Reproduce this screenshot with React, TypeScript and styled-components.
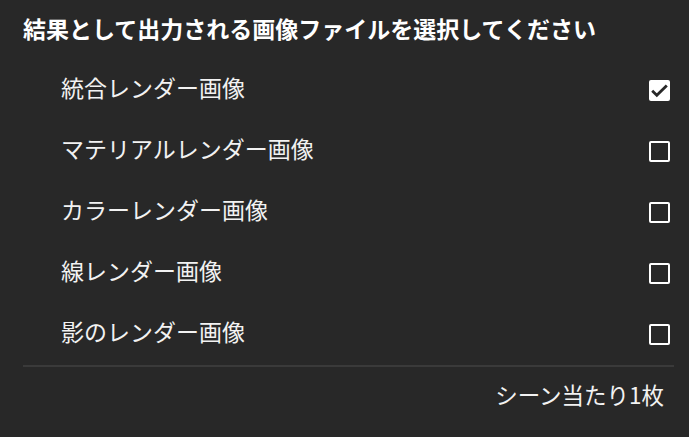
import React, { useState } from "react";
import styled, { createGlobalStyle } from "styled-components";

const GlobalStyle = createGlobalStyle`
  html, body {
    margin: 0;
    padding: 0;
    background: #282828;
  }
  body {
    font-family: "Noto Sans CJK JP", "Noto Sans", sans-serif;
  }
`;

const Panel = styled.div`
  width: 689px;
  height: 437px;
  box-sizing: border-box;
  padding: 0 15px 0 23px;
  background: #282828;
  color: #f2f2f2;
  display: flex;
  flex-direction: column;
`;

const Title = styled.h1`
  margin: 0;
  height: 60px;
  box-sizing: border-box;
  padding-bottom: 4px;
  display: flex;
  align-items: center;
  font-size: 23px;
  line-height: 1;
  font-weight: 700;
  color: #ffffff;
`;

const OptionList = styled.div`
  display: flex;
  flex-direction: column;
  border-bottom: 2px solid #3a3a3a;
`;

const OptionRow = styled.label`
  height: 61px;
  display: flex;
  align-items: center;
  justify-content: space-between;
  padding: 0 4px 0 38px;
  cursor: pointer;
`;

const OptionLabel = styled.span`
  font-size: 23px;
  line-height: 1;
  padding-bottom: 6px;
  font-weight: 400;
  color: #f2f2f2;
`;

const Box = styled.span<{ $checked: boolean }>`
  width: 21px;
  height: 21px;
  box-sizing: border-box;
  border-radius: 2px;
  border: ${(p) => (p.$checked ? "none" : "2px solid #ffffff")};
  background: ${(p) => (p.$checked ? "#ffffff" : "transparent")};
  display: flex;
  align-items: center;
  justify-content: center;
`;

const Footer = styled.div`
  height: 60px;
  box-sizing: border-box;
  padding: 0 10px 5px 0;
  display: flex;
  align-items: center;
  justify-content: flex-end;
  font-size: 22.5px;
  line-height: 1;
  color: #f2f2f2;
`;

const options = [
  "統合レンダー画像",
  "マテリアルレンダー画像",
  "カラーレンダー画像",
  "線レンダー画像",
  "影のレンダー画像",
];

const App = () => {
  const [checked, setChecked] = useState<boolean[]>([true, false, false, false, false]);

  const toggle = (index: number) => {
    setChecked(checked.map((c, i) => (i === index ? !c : c)));
  };

  return (
    <>
      <GlobalStyle />
      <Panel>
        <Title>結果として出力される画像ファイルを選択してください</Title>
        <OptionList>
          {options.map((value, index) => (
            <OptionRow key={value} onClick={() => toggle(index)}>
              <OptionLabel>{value}</OptionLabel>
              <Box $checked={checked[index]}>
                {checked[index] && (
                  <svg width="21" height="21" viewBox="0 0 21 21" fill="none">
                    <path d="M3.2 10.8l4.6 4.4L17.8 5.4" stroke="#282828" strokeWidth="2.8" />
                  </svg>
                )}
              </Box>
            </OptionRow>
          ))}
        </OptionList>
        <Footer>シーン当たり1枚</Footer>
      </Panel>
    </>
  );
};

export default App;
